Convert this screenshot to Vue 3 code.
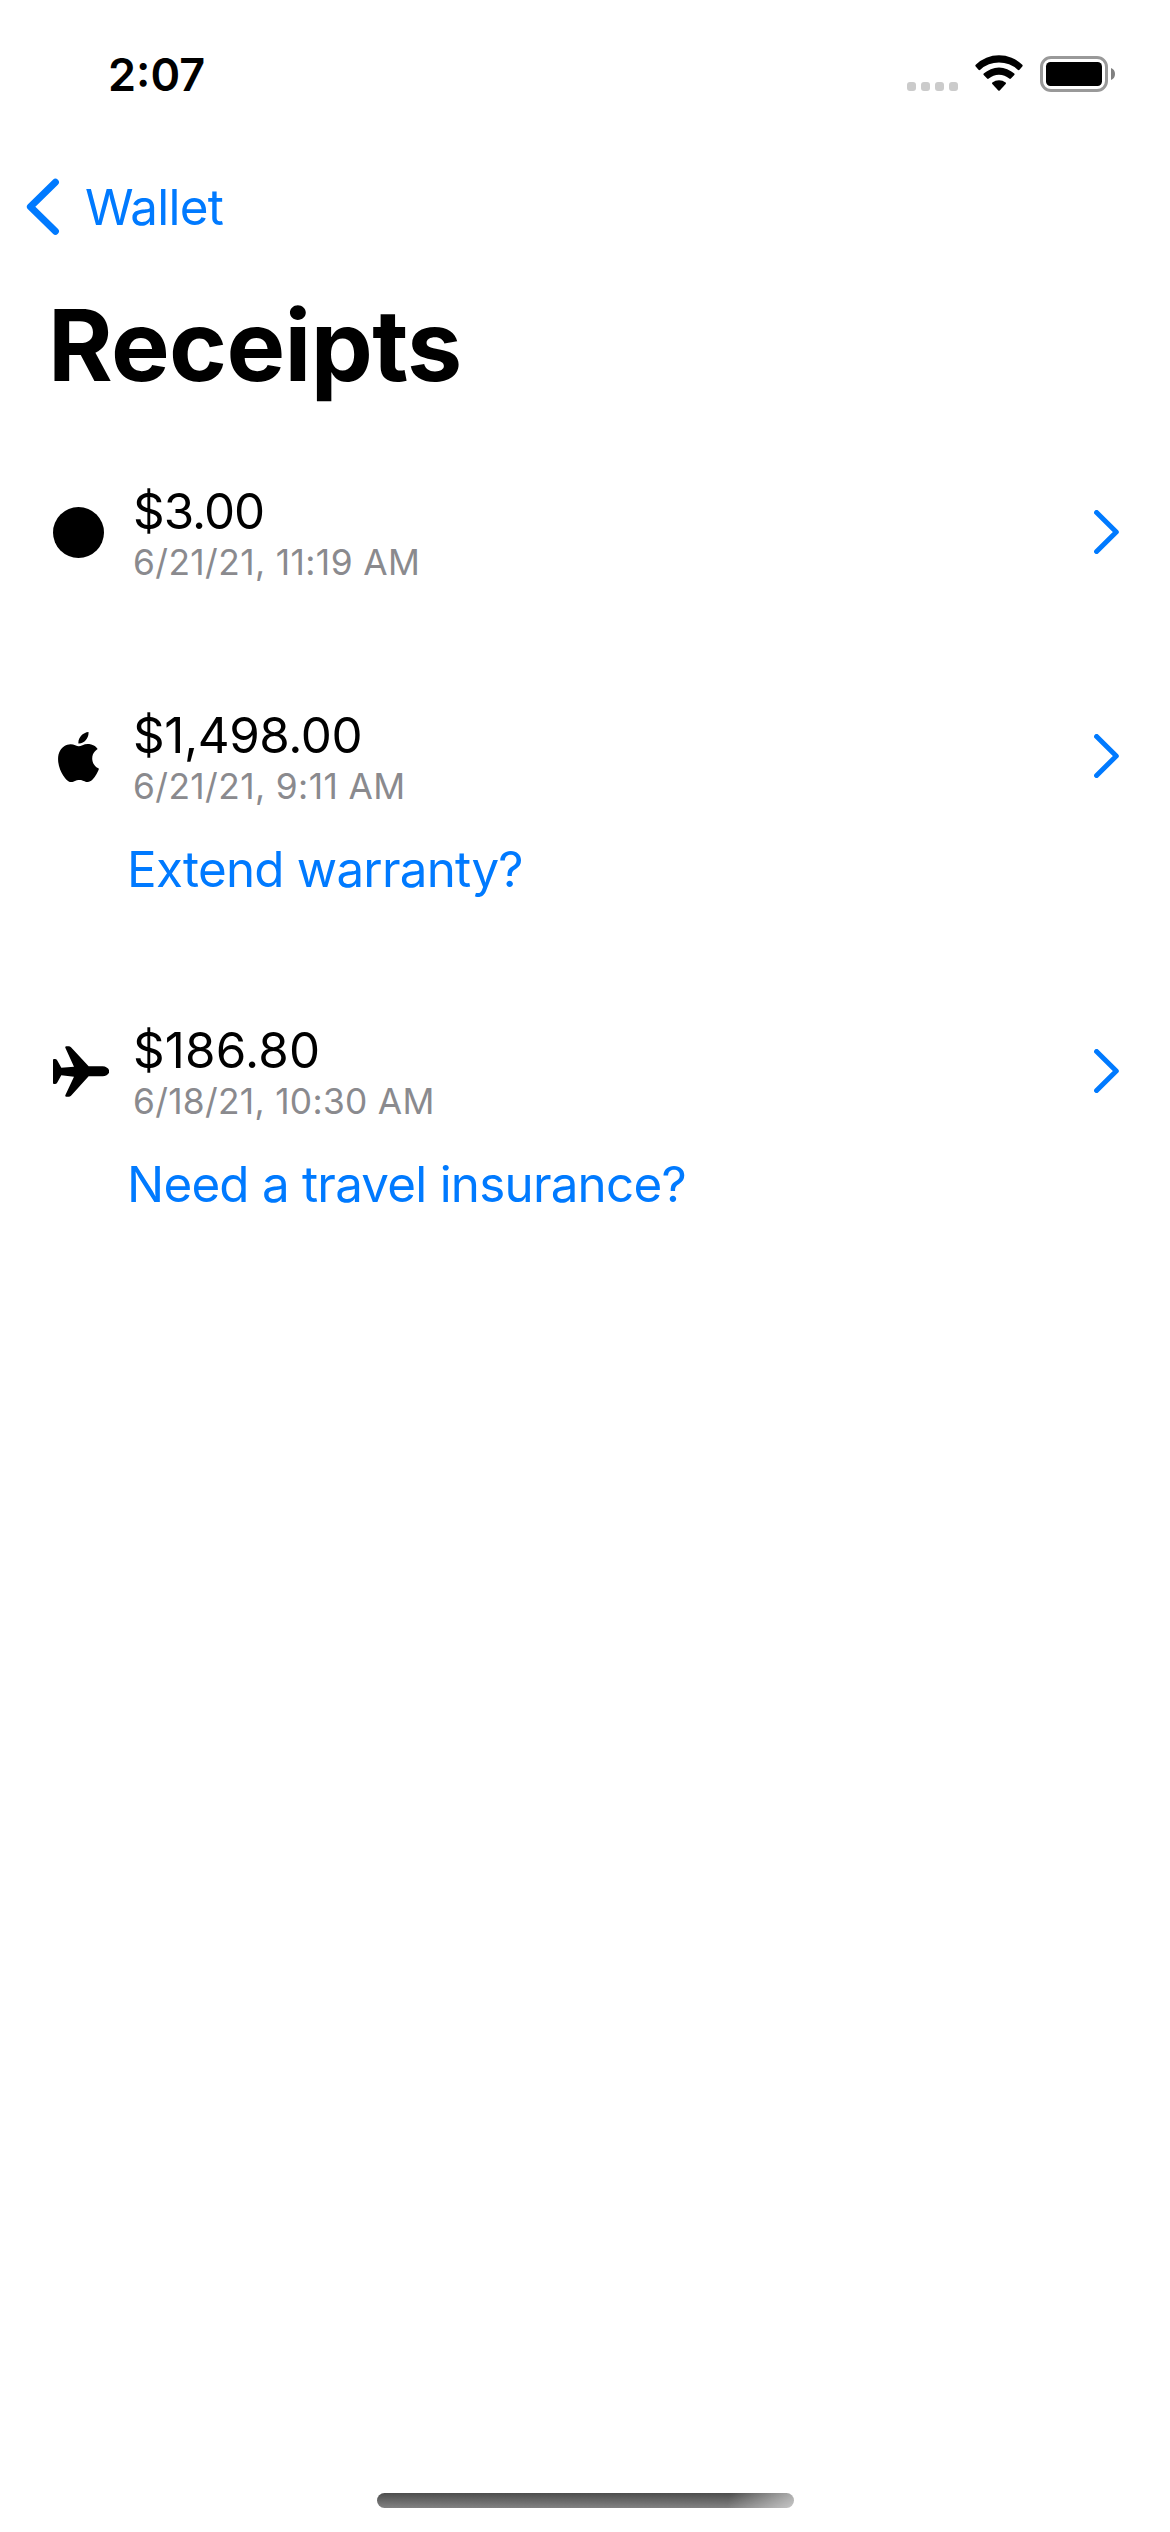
<script setup>
const receipts = [
  { id: 'coffee', icon: 'circle', amount: '$3.00', date: '6/21/21, 11:19 AM' },
  { id: 'apple', icon: 'apple', amount: '$1,498.00', date: '6/21/21, 9:11 AM', offer: 'Extend warranty?' },
  { id: 'flight', icon: 'airplane', amount: '$186.80', date: '6/18/21, 10:30 AM', offer: 'Need a travel insurance?' },
]
</script>

<template>
  <div class="screen">
    <header class="status">
      <span class="time">2:07</span>
      <div class="indicators">
        <div class="cell"><i v-for="n in 4" :key="n"></i></div>
        <svg class="wifi" viewBox="0 0 48 36" width="48" height="36">
          <path d="M0.5 11.2 Q0 10.5 .7 9.8 A33.500 33.500 0 0 1 47.300 9.800 Q48 10.500 47.500 11.200 L44.500 14.800 Q43.600 15.600 42.700 14.800 A27.500 27.500 0 0 0 5.300 14.800 Q4.400 15.600 3.500 14.800 Z" />
          <path d="M8.700 20 Q8 19.300 8.700 18.600 A22.500 22.500 0 0 1 39.300 18.600 Q40 19.300 39.300 20 L35.900 23.600 Q35.100 24.400 34.200 23.600 A15.500 15.500 0 0 0 13.800 23.600 Q12.900 24.400 12.100 23.600 Z" />
          <path d="M17.300 28.900 Q16.700 28.200 17.400 27.600 A10.200 10.200 0 0 1 30.600 27.600 Q31.300 28.200 30.700 28.900 L24.700 35.500 Q24 36.200 23.300 35.500 Z" />
        </svg>
        <svg class="battery" viewBox="0 0 75 36" width="75" height="36">
          <rect x="1.5" y="1.5" width="65" height="33" rx="9.5" fill="none" stroke="#999" stroke-width="3" />
          <rect x="6" y="6" width="56" height="24" rx="4.5" />
          <path d="M71 12 A6.5 6.5 0 0 1 71 24 Z" fill="#808080" />
        </svg>
      </div>
    </header>

    <nav class="nav">
      <svg viewBox="0 0 34 58" width="34" height="58">
        <path d="M29.4 4.2 L4.4 28.7 L29.4 53.2" fill="none" stroke="#007aff" stroke-width="7" stroke-linecap="round" stroke-linejoin="round" />
      </svg>
      <span class="back">Wallet</span>
    </nav>

    <h1>Receipts</h1>

    <ul class="list">
      <li v-for="r in receipts" :key="r.id" :class="r.id">
        <div class="row">
          <div class="icon">
            <svg v-if="r.icon === 'circle'" viewBox="0 0 51 51" width="51" height="51">
              <circle cx="25.5" cy="25.5" r="25.5" />
            </svg>
            <svg v-else-if="r.icon === 'apple'" class="logo" viewBox="2.2 0 19.6 24" width="41" height="50" preserveAspectRatio="none">
              <path d="M12.152 6.896c-.948 0-2.415-1.078-3.96-1.04-2.04.027-3.91 1.183-4.961 3.014-2.117 3.675-.546 9.103 1.519 12.09 1.013 1.454 2.208 3.09 3.792 3.039 1.52-.065 2.09-.987 3.935-.987 1.831 0 2.35.987 3.96.948 1.637-.026 2.676-1.48 3.676-2.948 1.156-1.688 1.636-3.325 1.662-3.415-.039-.013-3.182-1.221-3.22-4.857-.026-3.04 2.48-4.494 2.597-4.559-1.429-2.09-3.623-2.324-4.39-2.376-2-.156-3.675 1.09-4.61 1.09zM15.53 3.83c.843-1.012 1.4-2.427 1.245-3.83-1.207.052-2.662.805-3.532 1.818-.78.896-1.454 2.338-1.273 3.714 1.338.104 2.715-.688 3.559-1.701" />
            </svg>
            <svg v-else viewBox="39 48 169 153" width="56.3" height="51">
              <path d="M39 90 Q39 87 42 87 H45 Q49 87 51 90 L64 113 L102 110 L76 53 Q75 49 79 49 H86 Q90 49 93 52 L146 109 H188 C199 109 208 117 208 124.500 C208 132 199 139 188 139 H146 L93 197 Q90 200 86 200 H79 Q75 200 76 196 L102 140 L64 136 L51 159 Q49 162 45 162 H42 Q39 162 39 159 Z" />
            </svg>
          </div>
          <div class="text">
            <div class="amount">{{ r.amount }}</div>
            <div class="date">{{ r.date }}</div>
          </div>
          <svg class="chevron" viewBox="0 0 26 44" width="26" height="44">
            <path d="M2.600 2.500 L22.300 22 L2.600 41.500" fill="none" stroke="#007aff" stroke-width="5" stroke-linecap="round" stroke-linejoin="round" />
          </svg>
        </div>
        <div v-if="r.offer" class="offer">{{ r.offer }}</div>
      </li>
    </ul>

    <div class="home"></div>
  </div>
</template>

<style>
body { background: #fff; }
</style>

<style scoped>
.screen {
  width: 1170px;
  height: 2532px;
  box-sizing: border-box;
  display: flex;
  flex-direction: column;
  background: #fff;
  color: #000;
  font-family: Inter, "Liberation Sans", sans-serif;
  font-size: 49.300px;
  line-height: 60px;
  white-space: nowrap;
  overflow: hidden;
}
svg { display: block; flex: none; }
.status {
  height: 147px;
  display: flex;
  justify-content: space-between;
  padding: 0 55px 0 108px;
}
.time {
  margin-top: 45px;
  font-size: 45px;
  font-weight: 600;
}
.indicators { display: flex; align-items: flex-start; }
.cell { display: flex; gap: 5px; margin: 82px 17px 0 0; }
.cell i { width: 9px; height: 9px; border-radius: 3px; background: #cbcbcb; }
.wifi { margin: 55px 17px 0 0; }
.battery { margin-top: 56px; }
.nav {
  height: 120px;
  display: flex;
  align-items: center;
  padding-left: 26px;
  color: #007aff;
}
.back { margin-left: 25px; letter-spacing: -.7px; }
h1 {
  margin: 18px 0 0 48px;
  font-size: 98.600px;
  line-height: 120px;
  font-weight: 700;
  letter-spacing: -.6px;
}
.list {
  list-style: none;
  margin: 76px 0 0;
  padding: 0 50px 0 53px;
  display: flex;
  flex-direction: column;
  gap: 121px;
}
.apple { margin-top: 1px; }
.row { display: flex; align-items: center; height: 102px; }
.icon { width: 80px; }
.logo { margin-left: 5px; margin-bottom: -1px; }
.text { flex: 1; }
.amount { letter-spacing: -1px; }
.apple .amount { letter-spacing: -.4px; }
.flight .amount { letter-spacing: .2px; }
.date { margin: 1px 0 -1px; font-size: 35.300px; line-height: 42px; letter-spacing: .4px; color: #8a8a8e; }
.flight .date { letter-spacing: .3px; }
.offer { margin: 32px 0 0 74px; color: #007aff; letter-spacing: -.75px; }
.home {
  width: 417px;
  height: 15px;
  margin: auto auto 24px;
  border-radius: 8px;
  background:
    linear-gradient(100deg, transparent 84%, rgba(255, 255, 255, .55) 100%),
    linear-gradient(#4d4d4d, #828282);
}
</style>
